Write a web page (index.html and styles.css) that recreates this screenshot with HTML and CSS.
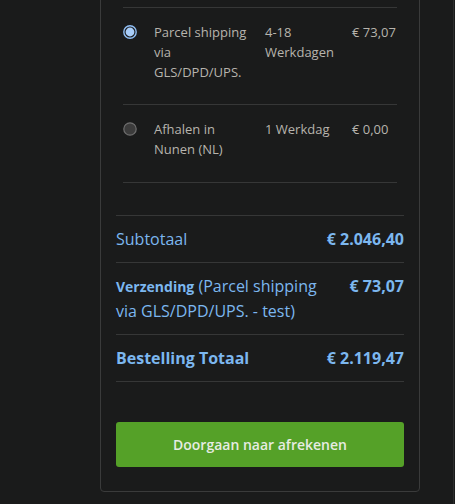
FILE: index.html
```html
<!DOCTYPE html>
<html lang="nl">
<head>
<meta charset="utf-8">
<link rel="stylesheet" href="styles.css">
</head>
<body>
<div class="page">
  <div class="card">
    <div class="ship-table">
      <div class="ship-row">
        <div class="radio-cell">
          <svg class="radio" width="14" height="14" viewBox="0 0 14 14"><circle cx="7" cy="7" r="6.2" fill="#1d1e20" stroke="#8fbdf3" stroke-width="1.4"/><circle cx="7" cy="7" r="4.4" fill="#a9cdf8"/></svg>
        </div>
        <div class="ship-name">Parcel shipping via GLS/DPD/UPS.</div>
        <div class="ship-time">4-18 Werkdagen</div>
        <div class="ship-price">€ 73,07</div>
      </div>
      <div class="ship-row">
        <div class="radio-cell">
          <svg class="radio" width="14" height="14" viewBox="0 0 14 14"><circle cx="7" cy="7" r="6.2" fill="#3c3c3c" stroke="#6e6e6e" stroke-width="1.2"/></svg>
        </div>
        <div class="ship-name">Afhalen in Nunen (NL)</div>
        <div class="ship-time">1 Werkdag</div>
        <div class="ship-price">€ 0,00</div>
      </div>
    </div>

    <div class="totals">
      <div class="total-row">
        <div class="label">Subtotaal</div>
        <div class="amount">€ 2.046,40</div>
      </div>
      <div class="total-row">
        <div class="label"><strong class="small-bold">Verzending</strong> (Parcel shipping via GLS/DPD/UPS. - test)</div>
        <div class="amount">€ 73,07</div>
      </div>
      <div class="total-row grand">
        <div class="label">Bestelling Totaal</div>
        <div class="amount">€ 2.119,47</div>
      </div>
    </div>

    <button class="checkout">Doorgaan naar afrekenen</button>
  </div>
</div>
</body>
</html>
```
FILE: styles.css
```css
html, body {
  margin: 0;
  padding: 0;
  background: #1a1b1b;
  font-family: "Open Sans", "Noto Sans", sans-serif;
}

.page {
  width: 453px;
  height: 504px;
  border-right: 1px solid #2c2d2d;
  overflow: hidden;
}

.card {
  margin: -30px 0 0 100px;
  width: 288px;
  padding: 30px 15px 24px;
  border: 1px solid #3a3b3b;
  border-radius: 4px;
  background: #1a1b1b;
}

.ship-table {
  margin: 6px 7px 0;
  border-top: 1px solid #363737;
}

.ship-row {
  display: grid;
  grid-template-columns: 31px 111px 87px 1fr;
  padding: 14px 0 22px;
  border-bottom: 1px solid #363737;
  font-size: 13px;
  line-height: 20px;
  color: #b7b4ad;
}

.ship-row + .ship-row {
  padding-bottom: 23px;
}

.radio-cell {
  display: flex;
  align-items: flex-start;
  padding-top: 3px;
}

.radio {
  display: block;
}

.ship-name,
.ship-time {
  padding-right: 10px;
}

.totals {
  margin-top: 32px;
  border-top: 1px solid #363737;
}

.total-row {
  display: flex;
  justify-content: space-between;
  gap: 16px;
  padding: 11px 0;
  border-bottom: 1px solid #363737;
  font-size: 16px;
  line-height: 24px;
  color: #7cb7ef;
}

.total-row .label {
  flex: 1;
}

.total-row .amount {
  font-weight: 700;
  white-space: nowrap;
}

.small-bold {
  font-size: 14px;
  font-weight: 700;
}

.total-row.grand .label {
  font-weight: 700;
}

.checkout {
  display: block;
  width: 100%;
  height: 45px;
  margin-top: 40px;
  border: none;
  border-radius: 3px;
  background: #55a128;
  color: #e6ece2;
  font-family: "Open Sans", "Noto Sans", sans-serif;
  font-size: 14px;
  font-weight: 600;
  cursor: pointer;
}
```
